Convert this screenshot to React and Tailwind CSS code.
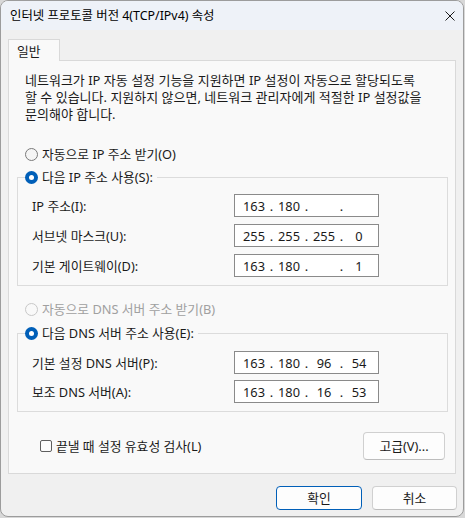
import React from "react";

const font = "font-['Noto_Sans','Noto_Sans_CJK_KR',sans-serif]";

function Radio({ checked, disabled, label }) {
  return (
    <div className="flex items-center h-[16px]">
      {checked ? (
        <span className="w-[13px] h-[13px] rounded-full bg-[#005fb8] flex items-center justify-center shrink-0">
          <span className="w-[5px] h-[5px] rounded-full bg-white" />
        </span>
      ) : (
        <span
          className={`w-[13px] h-[13px] rounded-full border shrink-0 ${
            disabled ? "border-[#c8c8c8] bg-[#f9f9f9]" : "border-[#7a7a7a] bg-[#f5f5f5]"
          }`}
        />
      )}
      <span className={`ml-[4px] whitespace-nowrap ${disabled ? "text-[#a0a0a0]" : "text-[#1a1a1a]"}`}>
        {label}
      </span>
    </div>
  );
}

function IpField({ parts }) {
  return (
    <div className="w-[145px] h-[23px] border border-[#8a8a8a] bg-white flex items-center pl-[7px] text-[#1a1a1a]">
      {parts.map((p, i) => (
        <React.Fragment key={i}>
          <span className="w-[24px] text-center">{p}</span>
          {i < 3 && <span className="w-[11px] text-center">.</span>}
        </React.Fragment>
      ))}
    </div>
  );
}

function Row({ label, parts, className = "" }) {
  return (
    <div className={`flex items-center ${className}`}>
      <span className="w-[216px] pl-[14px] text-[#1a1a1a] whitespace-nowrap">{label}</span>
      <IpField parts={parts} />
    </div>
  );
}

export default function App() {
  return (
    <div className={`w-[465px] h-[518px] bg-[#d8d8d8] text-[12.8px] leading-[16px] ${font}`}>
      <div className="w-[464px] h-[517px] border border-[#9c9c9c] rounded-[8px] overflow-hidden bg-[#f0f0f0] flex flex-col">
        {/* title bar */}
        <div className="h-[29px] bg-[#eef2f8] flex items-center justify-between pl-[9px] pr-[8px] shrink-0">
          <span className="text-[12.4px] text-black whitespace-nowrap">인터넷 프로토콜 버전 4(TCP/IPv4) 속성</span>
          <svg width="10" height="10" viewBox="0 0 10 10">
            <path d="M0.5 0.5 L9.5 9.5 M9.5 0.5 L0.5 9.5" stroke="#1a1a1a" strokeWidth="1" />
          </svg>
        </div>

        {/* body */}
        <div className="px-[7px] pt-[9px]">
          <div className="relative z-10 w-[52px] h-[22px] -mb-px border-t border-x border-[#d9d9d9] bg-[#f9f9f9] pl-[8px] flex items-center text-[#1a1a1a]">
            일반
          </div>
          <div className="w-[448px] h-[414px] border border-[#d9d9d9] bg-[#f9f9f9] pl-[8px] flex flex-col">
            <p className="mt-[11px] pl-[8px] text-[13px] leading-[17px] text-[#1a1a1a] whitespace-nowrap">
              네트워크가 IP 자동 설정 기능을 지원하면 IP 설정이 자동으로 할당되도록
              <br />
              할 수 있습니다. 지원하지 않으면, 네트워크 관리자에게 적절한 IP 설정값을
              <br />
              문의해야 합니다.
            </p>

            <div className="mt-[23px] pl-[8px]">
              <Radio label="자동으로 IP 주소 받기(O)" />
            </div>

            <fieldset className="mt-[7px] w-[431px] border border-[#dcdcdc] pb-[8px]">
              <legend className="ml-[7px] pr-[4px]">
                <Radio checked label="다음 IP 주소 사용(S):" />
              </legend>
              <Row className="mt-[9px]" label="IP 주소(I):" parts={["163", "180", "", ""]} />
              <Row className="mt-[7px]" label="서브넷 마스크(U):" parts={["255", "255", "255", "0"]} />
              <Row className="mt-[7px]" label="기본 게이트웨이(D):" parts={["163", "180", "", "1"]} />
            </fieldset>

            <div className="mt-[15px] pl-[8px]">
              <Radio disabled label="자동으로 DNS 서버 주소 받기(B)" />
            </div>

            <fieldset className="mt-[8px] w-[431px] border border-[#dcdcdc] pb-[8px]">
              <legend className="ml-[7px] pr-[4px]">
                <Radio checked label="다음 DNS 서버 주소 사용(E):" />
              </legend>
              <Row className="mt-[10px]" label="기본 설정 DNS 서버(P):" parts={["163", "180", "96", "54"]} />
              <Row className="mt-[6px]" label="보조 DNS 서버(A):" parts={["163", "180", "16", "53"]} />
            </fieldset>

            <div className="mt-[20px] h-[28px] flex items-center justify-between pl-[23px] pr-[10px]">
              <label className="flex items-center">
                <span className="w-[12px] h-[12px] rounded-[2px] border border-[#5e5e5e] bg-[#fbfbfb]" />
                <span className="ml-[4px] text-[#1a1a1a] whitespace-nowrap">끝낼 때 설정 유효성 검사(L)</span>
              </label>
              <button className="w-[82px] h-[28px] rounded-[4px] border border-[#d0d0d0] border-b-[#bdbdbd] bg-[#fdfdfd] text-[#1a1a1a]">
                고급(V)...
              </button>
            </div>
          </div>

          <div className="mt-[12px] flex justify-end gap-[10px] w-[449px]">
            <button className="w-[86px] h-[24px] rounded-[4px] border border-[#005fb8] bg-[#fdfdfd] text-[#1a1a1a]">
              확인
            </button>
            <button className="w-[85px] h-[24px] rounded-[4px] border border-[#d0d0d0] border-b-[#bdbdbd] bg-[#fdfdfd] text-[#1a1a1a]">
              취소
            </button>
          </div>
        </div>
      </div>
    </div>
  );
}
